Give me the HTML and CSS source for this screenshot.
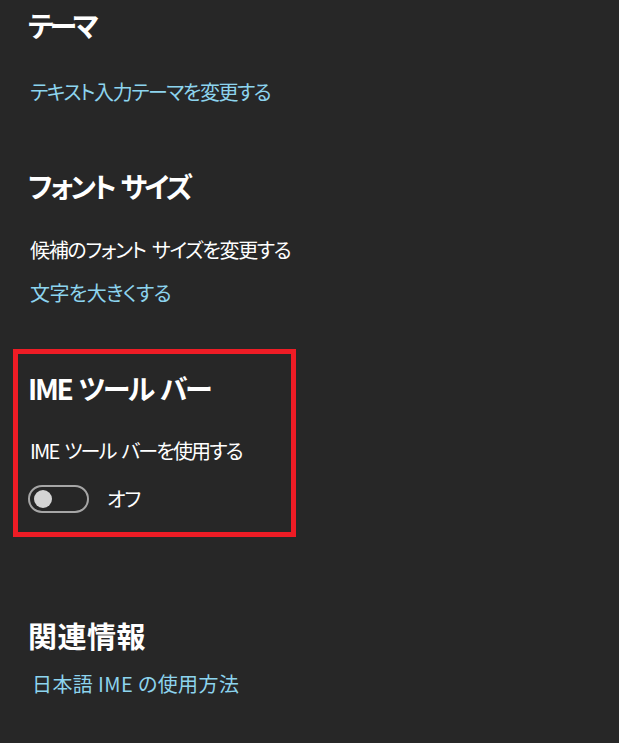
FILE: index.html
```html
<!DOCTYPE html>
<html lang="ja">
<head>
<meta charset="utf-8">
<link rel="stylesheet" href="styles.css">
</head>
<body>
<main class="page">
  <section class="sec sec-theme">
    <h2 class="title title-theme">テーマ</h2>
    <a class="link link-theme">テキスト入力テーマを変更する</a>
  </section>
  <section class="sec sec-font">
    <h2 class="title title-font">フォント サイズ</h2>
    <p class="desc desc-font">候補のフォント サイズを変更する</p>
    <a class="link link-font">文字を大きくする</a>
  </section>
  <section class="sec sec-ime">
    <h2 class="title title-ime">IME ツール バー</h2>
    <p class="desc desc-ime">IME ツール バーを使用する</p>
    <div class="toggle-row">
      <span class="toggle"><span class="knob"></span></span>
      <span class="toggle-label">オフ</span>
    </div>
  </section>
  <section class="sec sec-related">
    <h2 class="title title-related">関連情報</h2>
    <a class="link link-related">日本語 IME の使用方法</a>
  </section>
</main>
</body>
</html>
```
FILE: styles.css
```css
html, body {
  margin: 0;
  padding: 0;
  background: #272727;
}
body {
  width: 619px;
  height: 743px;
  overflow: hidden;
  font-family: "Noto Sans CJK JP", "Noto Sans", sans-serif;
  font-feature-settings: "palt";
  color: #ffffff;
}
.page {
  display: flex;
  flex-direction: column;
  padding: 7px 0 0 28px;
}
.sec {
  display: flex;
  flex-direction: column;
  align-items: flex-start;
}
.title {
  margin: 0;
  font-size: 28px;
  line-height: 36px;
  font-weight: 700;
  color: #ffffff;
}
.title-theme { letter-spacing: -4px; }
.title-font { letter-spacing: -2.8px; word-spacing: 3px; }
.title-ime { letter-spacing: -2.3px; word-spacing: 3px; }
.title-related { font-size: 29px; letter-spacing: 0.5px; }
.desc {
  margin: 0;
  font-size: 20px;
  line-height: 28px;
  font-weight: 400;
  color: #ffffff;
}
.link {
  display: block;
  font-size: 20px;
  line-height: 28px;
  color: #8dd4ee;
  text-decoration: none;
  margin-left: 2px;
}
.sec-theme .link-theme { margin-top: 35px; letter-spacing: -1.4px; }
.sec-font { margin-top: 62px; }
.sec-font .desc-font { margin-top: 32px; margin-left: 2px; letter-spacing: -1.3px; word-spacing: 3px; }
.sec-font .link-font { margin-top: 15px; letter-spacing: -0.6px; }
.sec-ime {
  margin-top: 42px;
  margin-left: -15px;
  box-sizing: border-box;
  width: 283px;
  height: 188px;
  border: 5px solid #ee1c25;
  padding: 16px 0 0 10px;
}
.sec-ime .desc-ime { margin-top: 31px; margin-left: 2px; letter-spacing: -1.8px; word-spacing: 3px; }
.toggle-row {
  display: flex;
  align-items: center;
  gap: 18px;
  margin-top: 20px;
}
.toggle {
  box-sizing: border-box;
  width: 61px;
  height: 28px;
  border: 2px solid #a6a6a6;
  border-radius: 14px;
  display: flex;
  align-items: center;
  padding-left: 4px;
}
.knob {
  width: 18px;
  height: 18px;
  border-radius: 50%;
  background: #d4d4d4;
}
.toggle-label {
  font-size: 20px;
  line-height: 28px;
  letter-spacing: -1px;
}
.sec-related { margin-top: 80px; }
.sec-related .link-related { margin-top: 17px; margin-left: 4px; letter-spacing: 0.4px; }
```
